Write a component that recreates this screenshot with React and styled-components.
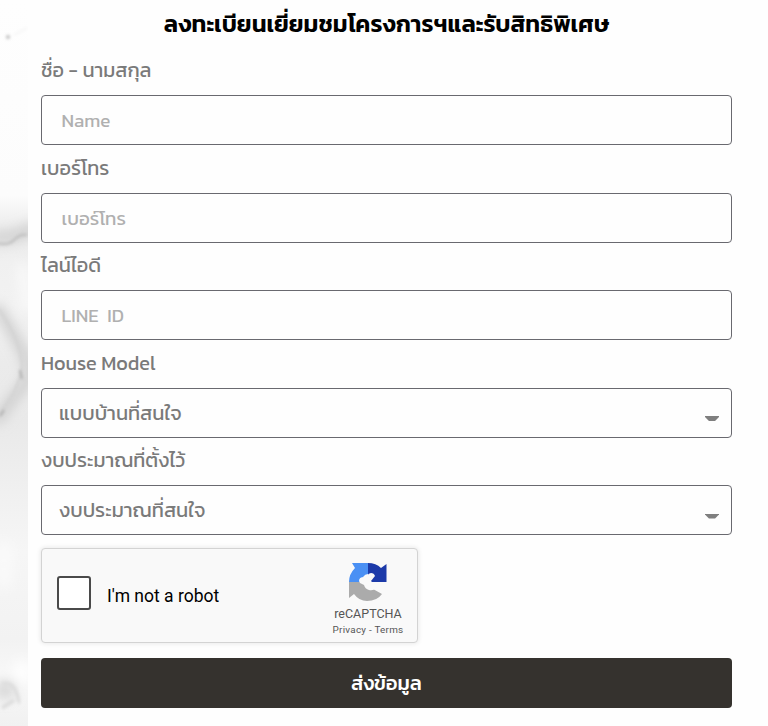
import React from 'react';
import styled, { createGlobalStyle } from 'styled-components';

const grey = '#7a7a7a';
const border = '#69696f';
const charcoal = '#35322e';

const fields = [
    { label: 'ชื่อ - นามสกุล', placeholder: 'Name' },
    { label: 'เบอร์โทร', placeholder: 'เบอร์โทร' },
    { label: 'ไลน์ไอดี', placeholder: 'LINE  ID' },
    { label: 'House Model', value: 'แบบบ้านที่สนใจ' },
    { label: 'งบประมาณที่ตั้งไว้', value: 'งบประมาณที่สนใจ' },
];

const Marble = () => (
    <MarbleSvg viewBox="0 0 28 726" preserveAspectRatio="none">
        <defs>
            <linearGradient id="stone" x1="0" y1="0" x2="0" y2="1">
                <stop offset="0" stopColor="#fefefe" />
                <stop offset="0.27" stopColor="#fcfcfc" />
                <stop offset="0.32" stopColor="#e9e9e9" />
                <stop offset="0.36" stopColor="#f0f0f0" />
                <stop offset="0.42" stopColor="#f2f2f2" />
                <stop offset="0.5" stopColor="#ebebeb" />
                <stop offset="0.58" stopColor="#e9e9e9" />
                <stop offset="0.65" stopColor="#eeeeee" />
                <stop offset="0.76" stopColor="#f6f6f6" />
                <stop offset="0.88" stopColor="#f2f2f2" />
                <stop offset="0.93" stopColor="#f8f8f8" />
                <stop offset="1" stopColor="#f1f1f1" />
            </linearGradient>
            <filter id="soft" filterUnits="userSpaceOnUse" x="-40" y="0" width="108" height="760">
                <feGaussianBlur stdDeviation="1.8" />
            </filter>
            <filter id="cloud" filterUnits="userSpaceOnUse" x="-40" y="0" width="108" height="760">
                <feGaussianBlur stdDeviation="6" />
            </filter>
        </defs>
        <rect width="28" height="726" fill="url(#stone)" />
        <g filter="url(#cloud)" fill="none">
            <path d="M-8 238Q14 240 36 226" stroke="#d2d2d2" strokeWidth="12" />
            <path d="M-4 305Q8 325 22 350T20 390Q8 405 -4 422" stroke="#cdcdcd" strokeWidth="10" />
            <path d="M22 265L28 310" stroke="#fafafa" strokeWidth="10" />
            <ellipse cx="4" cy="565" rx="9" ry="24" fill="#fafafa" />
            <ellipse cx="22" cy="672" rx="9" ry="12" fill="#fefefe" />
            <path d="M-4 690H14" stroke="#d8d8d8" strokeWidth="18" />
        </g>
        <g filter="url(#soft)" fill="none">
            <path d="M-3 243Q8 246 14 240T27 235" stroke="#bcbcbc" strokeWidth="2" />
            <path d="M-2 308Q10 325 16 340T22 368Q19 386 8 402T-2 418" stroke="#d2d2d2" strokeWidth="2" />
            <path d="M20 370L22 379M0 416L4 410" stroke="#aaa" strokeWidth="2" />
            <path d="M2 684Q12 682 16 692T18 703M2 708L14 700" stroke="#dedede" strokeWidth="4" />
            <circle cx="8" cy="37" r="2" fill="#bbb" />
            <path d="M14 35L27 28" stroke="#f6f6f6" strokeWidth="2" />
        </g>
    </MarbleSvg>
);

const CaptchaLogo = () => (
    <svg width="38" height="38" viewBox="0 0 38 38">
        <path fill="#4a90f4" d="M19 0V11Q16 11 14 14L18 19H0Q0 11 6 5L3 0Z" />
        <path fill="#1c3aa9" d="M19 0Q27 0 32 5L37.500 1V19H19V11Z" />
        <path fill="#ababab" d="M0 19H19L24 26L33 31Q28 38 18 38Q10 38 5 31L0 35Z" />
        <path fill="#f9f9f9" d="M10 18Q10 14 15 14L18 17Q17 11 22 10Q25 10 26 13L22 18L28 24Q25 28 20 27Q16 26 15 22L11 20Z" />
    </svg>
);

export default function App() {
    return (
        <>
            <GlobalStyle />
            <Page>
                <Marble />
                <Form>
                    <Title>ลงทะเบียนเยี่ยมชมโครงการฯและรับสิทธิพิเศษ</Title>
                    {fields.map(({ label, placeholder, value }) => (
                        <Field key={label}>
                            <Label>{label}</Label>
                            <Control $select={!!value}>
                                <ControlText $placeholder={!value}>{value || placeholder}</ControlText>
                                {value && <Caret />}
                            </Control>
                        </Field>
                    ))}
                    <Captcha>
                        <Checkbox />
                        <RobotText>I'm not a robot</RobotText>
                        <Brand>
                            <CaptchaLogo />
                            <BrandName>reCAPTCHA</BrandName>
                            <BrandLinks>Privacy - Terms</BrandLinks>
                        </Brand>
                    </Captcha>
                    <Submit>ส่งข้อมูล</Submit>
                </Form>
            </Page>
        </>
    );
}

const GlobalStyle = createGlobalStyle`
    * {
        box-sizing: border-box;
    }
    body {
        margin: 0;
        background: #fefefe;
        font-family: Kanit, 'Noto Sans Thai', 'Noto Sans', sans-serif;
    }
`;

const Page = styled.div`
    display: flex;
    width: 768px;
    height: 726px;
    overflow: hidden;
`;

const MarbleSvg = styled.svg`
    flex: none;
    width: 28px;
    height: 726px;
`;

const Form = styled.div`
    flex: 1;
    display: flex;
    flex-direction: column;
    padding: 0 36px 0 13px;
`;

const Title = styled.h1`
    height: 47px;
    margin: 0;
    color: #000;
    font-size: 23.75px;
    font-weight: 600;
    line-height: 47px;
    text-align: center;
    white-space: nowrap;
`;

const Field = styled.div`
    height: 97.5px;
`;

const Label = styled.div`
    height: 48px;
    color: ${grey};
    font-size: 19.9px;
    line-height: 47px;
    white-space: nowrap;
`;

const Control = styled.div`
    display: flex;
    align-items: center;
    justify-content: space-between;
    height: 50px;
    padding: ${(props) => (props.$select ? '0 12px 0 17px' : '0 19.500px')};
    border: 1px solid ${border};
    border-radius: 4px;
`;

const ControlText = styled.span`
    padding-top: 0.4px;
    color: ${(props) => (props.$placeholder ? '#b0b0b0' : grey)};
    font-size: ${(props) => (props.$placeholder ? '18.8px' : '20px')};
    line-height: 48px;
    white-space: pre;
`;

const Caret = styled.i`
    width: 14px;
    height: 5px;
    margin-top: 12px;
    background: #7f7f7f;
    clip-path: polygon(0 0, 100% 0, 100% 20%, 72% 100%, 28% 100%, 0 20%);
`;

const Captcha = styled.div`
    display: flex;
    align-items: center;
    width: 377px;
    height: 95px;
    margin-top: 13px;
    padding: 0 13px 0 15px;
    background: #f9f9f9;
    border: 1px solid #d3d3d3;
    border-radius: 4px;
    box-shadow: 0 0 4px 1px rgba(0, 0, 0, 0.08);
    font-family: Roboto, sans-serif;
`;

const Checkbox = styled.div`
    width: 34px;
    height: 34px;
    margin-bottom: 5px;
    background: #fff;
    border: 2px solid #4a4a4a;
    border-radius: 3px;
`;

const RobotText = styled.span`
    margin-left: 16px;
    padding-top: 1px;
    color: #000;
    font-size: 17.5px;
`;

const Brand = styled.div`
    display: flex;
    flex-direction: column;
    align-items: center;
    width: 72px;
    margin-left: auto;
    padding-top: 9px;
    color: #555;
    white-space: nowrap;
`;

const BrandName = styled.span`
    margin-top: 4px;
    font-size: 12.5px;
    line-height: 17px;
`;

const BrandLinks = styled.span`
    margin-top: 1px;
    font-size: 9.9px;
    letter-spacing: 0.25px;
    line-height: 14px;
`;

const Submit = styled.button`
    height: 50px;
    margin-top: 15px;
    padding: 1px 0 0;
    color: #fff;
    background: ${charcoal};
    border: 0;
    border-radius: 4px;
    font-family: inherit;
    font-size: 20px;
    font-weight: 500;
`;
